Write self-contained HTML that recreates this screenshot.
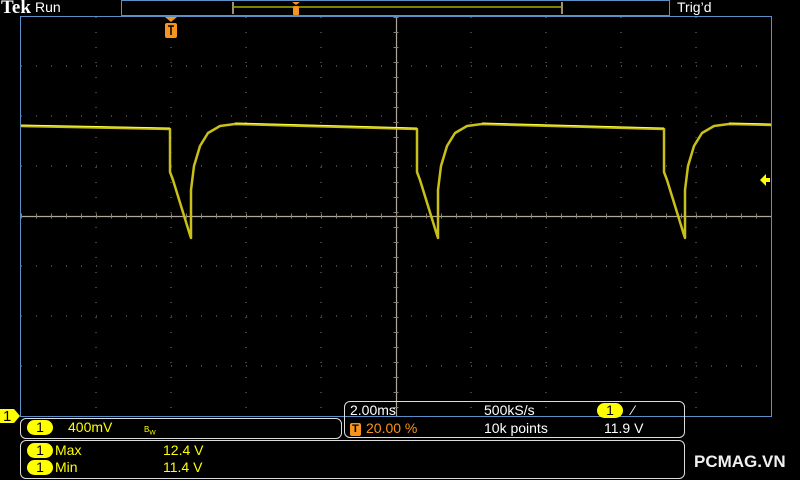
<!DOCTYPE html>
<html><head><meta charset="utf-8"><style>
body{margin:0;background:#000;width:800px;height:480px;overflow:hidden;position:relative;font-family:"Liberation Sans",sans-serif;}
.t{position:absolute;font-size:14px;color:#fff;white-space:nowrap;line-height:15px}
.y{color:#ffff00}.o{color:#f7941d}
.pill{position:absolute;background:#ffff00;color:#000;border-radius:8px;width:26px;height:15px;text-align:center;font-size:14px;line-height:15px}
.box{position:absolute;border:1px solid #ddd;border-radius:6px}
</style></head><body>
<svg width="800" height="480" style="position:absolute;left:0;top:0">
<g stroke="#8a8070" stroke-width="1" fill="none">
<path d="M96,17V416M171,17V416M246,17V416M321,17V416M471,17V416M546,17V416M621,17V416M696,17V416" stroke-dasharray="1 14"/>
<path d="M21,66H771M21,116H771M21,166H771M21,266H771M21,316H771M21,366H771" stroke-dasharray="1 14"/>
</g>
<g stroke="#b0a898" stroke-width="1.2">
<line x1="21" y1="216.5" x2="771" y2="216.5"/><line x1="396.5" y1="17" x2="396.5" y2="416"/>
</g>
<g stroke="#8a8070" stroke-dasharray="1 14" stroke-width="5">
<line x1="21" y1="216" x2="771" y2="216"/><line x1="396" y1="17" x2="396" y2="416"/>
</g>
<rect x="20.5" y="16.5" width="751" height="400" fill="none" stroke="#5b8fc7"/>
<rect x="121.5" y="0.5" width="548" height="15" fill="none" stroke="#5b8fc7"/>
<line x1="233" y1="7" x2="562" y2="7" stroke="#ffff00" stroke-width="1"/>
<path d="M233,2V14M562,2V14" stroke="#a09070" stroke-width="2"/>
<path d="M292,2h8l-4,3z" fill="#f7941d"/><rect x="293" y="6" width="6" height="9" rx="1" fill="#f7941d"/>
<path d="M165,17h12l-6,5z" fill="#f7941d"/><rect x="165" y="23" width="12" height="15" rx="2" fill="#f7941d"/>
<path d="M168,26h6M171,26v9" stroke="#000" stroke-width="1.5"/>
<path d="M760,180l6,-6v4h4v4h-4v4z" fill="#ffff00"/>
<g fill="none" stroke="#c8c018" stroke-width="2.5" stroke-linejoin="round">
<path d="M21,126 L170,129 L170,172 L173,180 L190,235 L191,238 L191,190 L194,166 L200,146 L208,133 L220,126 L235,124 L417,129 L417,172 L420,180 L437,235 L438,238 L438,190 L441,166 L447,146 L455,133 L467,126 L482,124 L664,129 L664,172 L667,180 L684,235 L685,238 L685,190 L688,166 L694,146 L702,133 L714,126 L729,124 L771,125"/>
</g>
<g fill="none" stroke="#ffff40" stroke-width="1">
<path d="M21,125 L170,128 M235,123 L417,128 M482,123 L664,128 M729,123 L771,124"/>
</g>
<path d="M0,409h14l6,7l-6,7h-14z" fill="#ffff00"/>
</svg>
<div class="t" style="left:1px;top:-1px;font-family:'Liberation Serif',serif;font-weight:bold;font-size:19px;line-height:18px">Tek</div>
<div class="t" style="left:35px;top:0px">Run</div>
<div class="t" style="left:677px;top:0px">Trig’d</div>
<div class="t" style="left:3px;top:409px;color:#000;font-size:15px">1</div>
<div class="box" style="left:20px;top:418px;width:320px;height:19px"></div>
<div class="pill" style="left:27px;top:420px">1</div>
<div class="t y" style="left:68px;top:420px">400mV</div>
<div class="t y" style="left:144px;top:422px;font-size:8px">B<sub>W</sub></div>
<div class="box" style="left:344px;top:401px;width:339px;height:35px"></div>
<div class="t" style="left:350px;top:403px">2.00ms</div>
<div class="t" style="left:484px;top:403px">500kS/s</div>
<div class="pill" style="left:597px;top:403px">1</div>
<div class="t" style="left:632px;top:403px">⁄</div>
<div style="position:absolute;left:350px;top:423px;width:11px;height:13px;background:#f7941d;border-radius:2px"></div>
<div class="t" style="left:352px;top:422px;color:#000;font-weight:bold;font-size:11px">T</div>
<div class="t o" style="left:366px;top:421px">20.00 %</div>
<div class="t" style="left:484px;top:421px">10k points</div>
<div class="t" style="left:604px;top:421px">11.9 V</div>
<div class="box" style="left:20px;top:440px;width:663px;height:37px"></div>
<div class="pill" style="left:27px;top:443px">1</div>
<div class="t y" style="left:55px;top:443px">Max</div>
<div class="t y" style="left:163px;top:443px">12.4 V</div>
<div class="pill" style="left:27px;top:460px">1</div>
<div class="t y" style="left:55px;top:460px">Min</div>
<div class="t y" style="left:163px;top:460px">11.4 V</div>
<div class="t" style="left:694px;top:453px;font-weight:bold;font-size:17px;line-height:18px;color:#f0f0f0">PCMAG.VN</div>
</body></html>
